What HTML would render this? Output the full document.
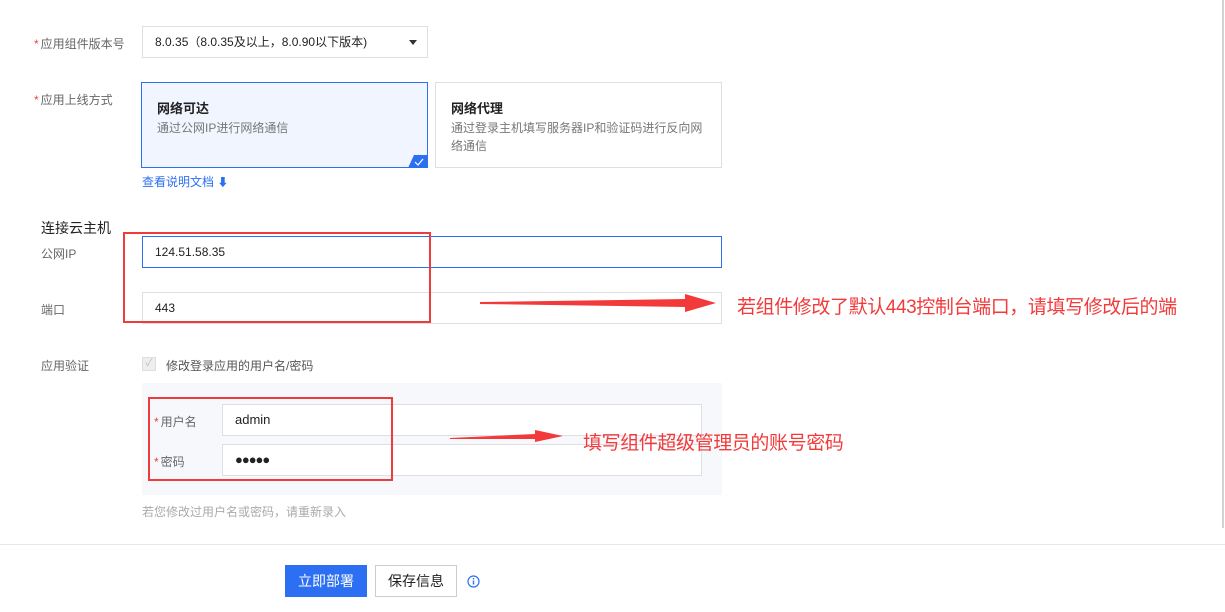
<!DOCTYPE html>
<html><head><meta charset="utf-8"><style>
body{margin:0;width:1225px;height:612px;background:#fff;position:relative;overflow:hidden;font-family:"Liberation Sans","Noto Sans CJK SC",sans-serif;}
.a{position:absolute;}
.lbl{font-size:12px;color:#666;}
.st{color:#e54545;margin-right:2px;}
.in{position:absolute;border:1px solid #dcdfe6;background:#fff;box-sizing:border-box;font-size:12px;color:#222;padding-left:12px;}
.red{position:absolute;border:2px solid #ee3b3b;box-sizing:border-box;}
.note{position:absolute;color:#f23a3a;font-size:19px;letter-spacing:-0.4px;}
</style></head><body>
<div class="a" style="left:1222px;top:0;width:2px;height:528px;background:#d3d3d3"></div>

<div class="a lbl" style="left:34px;top:35px"><span class="st">*</span>应用组件版本号</div>
<div class="in" style="left:142px;top:26px;width:286px;height:32px;line-height:30px">8.0.35（8.0.35及以上，8.0.90以下版本)</div>
<div class="a" style="left:409px;top:40px;width:0;height:0;border-left:4px solid transparent;border-right:4px solid transparent;border-top:5px solid #333"></div>

<div class="a lbl" style="left:34px;top:91px"><span class="st">*</span>应用上线方式</div>
<div class="a" style="left:141px;top:82px;width:287px;height:86px;border:1px solid #2d6ff2;box-sizing:border-box;background:#f0f5ff"></div>
<div class="a" style="left:157px;top:98px;font-size:13px;font-weight:bold;color:#222">网络可达</div>
<div class="a" style="left:157px;top:119px;font-size:12px;color:#777">通过公网IP进行网络通信</div>
<svg class="a" style="left:408px;top:155px" width="20" height="13"><polygon points="6,0 20,0 20,13 0,13" fill="#2d6ff2"/><path d="M7 7 L10 10 L15 4" stroke="#fff" stroke-width="1.2" fill="none"/></svg>
<div class="a" style="left:435px;top:82px;width:287px;height:86px;border:1px solid #dcdfe6;box-sizing:border-box"></div>
<div class="a" style="left:451px;top:98px;font-size:13px;font-weight:bold;color:#222">网络代理</div>
<div class="a" style="left:451px;top:119px;font-size:12px;color:#777;width:260px;line-height:18px">通过登录主机填写服务器IP和验证码进行反向网络通信</div>
<div class="a" style="left:142px;top:173px;font-size:12px;color:#2d6ff2">查看说明文档 <span style="font-size:11px">⬇</span></div>

<div class="a" style="left:41px;top:218px;font-size:14px;color:#222">连接云主机</div>
<div class="a lbl" style="left:41px;top:245px">公网IP</div>
<div class="in" style="left:142px;top:236px;width:580px;height:32px;line-height:30px;border-color:#2d6ff2">124.51.58.35</div>
<div class="a lbl" style="left:41px;top:301px">端口</div>
<div class="in" style="left:142px;top:292px;width:580px;height:32px;line-height:30px">443</div>
<div class="red" style="left:123px;top:232px;width:308px;height:91px"></div>
<svg class="a" style="left:480px;top:292px" width="240" height="22"><polygon points="0,10 205,7 205,2 236,11 205,20 205,15 0,12" fill="#f23a3a"/></svg>
<div class="note" style="left:737px;top:292px">若组件修改了默认443控制台端口，请填写修改后的端</div>

<div class="a lbl" style="left:41px;top:357px">应用验证</div>
<div class="a" style="left:142px;top:357px;width:14px;height:14px;border:1px solid #dcdfe6;background:#eee;box-sizing:border-box;color:#bbb;font-size:10px;line-height:12px;text-align:center">✓</div>
<div class="a" style="left:166px;top:357px;font-size:12px;color:#555">修改登录应用的用户名/密码</div>
<div class="a" style="left:142px;top:383px;width:580px;height:112px;background:#f7f8fb"></div>
<div class="a lbl" style="left:154px;top:413px"><span class="st">*</span>用户名</div>
<div class="in" style="left:222px;top:404px;width:480px;height:32px;line-height:30px;font-size:13px">admin</div>
<div class="a lbl" style="left:154px;top:453px"><span class="st">*</span>密码</div>
<div class="in" style="left:222px;top:444px;width:480px;height:32px;line-height:30px;font-size:13px;letter-spacing:-1px">●●●●●</div>
<div class="red" style="left:148px;top:397px;width:245px;height:84px"></div>
<svg class="a" style="left:450px;top:429px" width="115" height="16"><polygon points="0,9 85,5 85,1 113,7 85,13 85,10 0,10" fill="#f23a3a"/></svg>
<div class="note" style="left:583px;top:428px">填写组件超级管理员的账号密码</div>
<div class="a" style="left:142px;top:503px;font-size:12px;color:#aaa">若您修改过用户名或密码，请重新录入</div>

<div class="a" style="left:0;top:544px;width:1225px;height:1px;background:#e8e8e8"></div>
<div class="a" style="left:285px;top:565px;width:82px;height:32px;background:#2d6ff2;color:#fff;font-size:14px;text-align:center;line-height:32px">立即部署</div>
<div class="a" style="left:375px;top:565px;width:82px;height:32px;border:1px solid #ccc;box-sizing:border-box;color:#222;font-size:14px;text-align:center;line-height:30px">保存信息</div>
<svg class="a" style="left:467px;top:575px" width="13" height="13"><circle cx="6.5" cy="6.5" r="5.5" stroke="#2d6ff2" stroke-width="1.2" fill="none"/><rect x="5.8" y="5.5" width="1.4" height="4" fill="#2d6ff2"/><rect x="5.8" y="3" width="1.4" height="1.4" fill="#2d6ff2"/></svg>
</body></html>
